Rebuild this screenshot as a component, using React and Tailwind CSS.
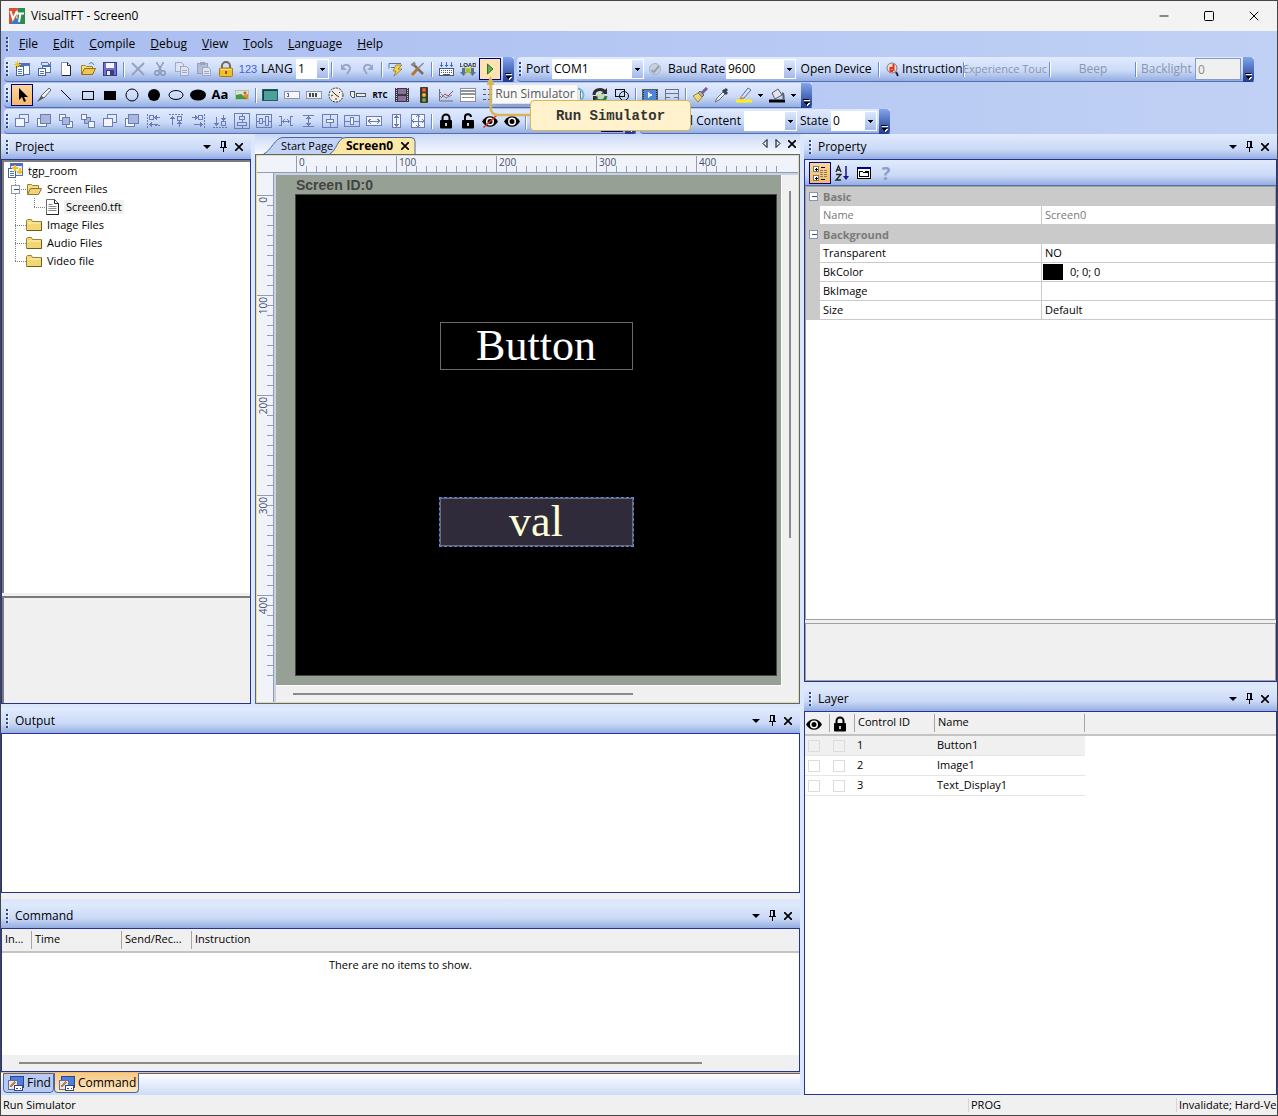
import { X, Minus, Square } from "lucide-react";

const Svg = ({ children, size = 16, crisp }) => (
  <svg
    width={size}
    height={size}
    viewBox="0 0 16 16"
    fill="none"
    shapeRendering={crisp ? "crispEdges" : "auto"}
    className="shrink-0"
    aria-hidden="true"
  >
    {children}
  </svg>
);

const B = "#6b7db3"; // outline colour of the alignment icons

const icons = {
  newProject: (
    <Svg crisp>
      <rect x="5.500" y="2.500" width="10" height="11" fill="#f4f8ff" stroke="#5b6fa8" />
      <rect x="5" y="2" width="11" height="3" fill="#4f6fc4" />
      <rect x="2.500" y="5.500" width="7" height="9" fill="#fff" stroke="#4a62a0" />
      <path d="M4 8.500h4M4 10.500h4M4 12.500h4" stroke="#4a78c8" />
      <path d="M3.500 0v7M0 3.500h7M1 1l5 5M6 1l-5 5" stroke="#f2c312" />
    </Svg>
  ),
  project: (
    <Svg crisp>
      <rect x="3.500" y=".5" width="12" height="12" fill="#e7effd" stroke="#5b6fa8" />
      <rect x="3" y="0" width="13" height="3" fill="#4f6fc4" />
      <rect x="1.500" y="5.500" width="7" height="9" fill="#fff" stroke="#4a62a0" />
      <path d="M3 8.500h4M3 10.500h4M3 12.500h4" stroke="#4a78c8" />
      <path d="M7.500 2v6M5 4.500h6M12.500 5v6M10 8.500h5" stroke="#f2c312" strokeWidth="2" />
    </Svg>
  ),
  openProject: (
    <Svg crisp>
      <rect x="6.500" y="4.500" width="8" height="7" fill="#f4f8ff" stroke="#5b6fa8" />
      <rect x="6" y="4" width="9" height="2" fill="#4f6fc4" />
      <rect x="2.500" y="7.500" width="7" height="7" fill="#fff" stroke="#4a62a0" />
      <path d="M4 10.500h4M4 12.500h4" stroke="#4a78c8" />
      <path d="M5 4V2.500L7 1h4l2 2M11.500 3.500H14V1" stroke="#6c7bab" />
    </Svg>
  ),
  file: (
    <Svg>
      <path d="M3.500 1.500h6l3 3v10h-9z" fill="#fff" stroke="#8a90a3" />
      <path d="M9.500 1.500v3h3" stroke="#22252e" />
      <path d="M4 14.500h8.500V5" stroke="#22252e" />
    </Svg>
  ),
  open: (
    <Svg>
      <path d="M1.500 13.500v-9h4l1 1h6v3" fill="#f7dd84" stroke="#a08030" />
      <path d="M1.500 13.500l3-6h11l-3 6z" fill="#f2c64d" stroke="#8d6d1f" />
      <path d="M9 3q3-3 5 1" stroke="#5c74ab" />
    </Svg>
  ),
  openFolder: (
    <Svg>
      <path d="M1.500 13.500v-10h4l1 1h6v3" fill="#f7dd84" stroke="#a08030" />
      <path d="M1.500 13.500l3-6h11l-3 6z" fill="#f4d27a" stroke="#8d7535" />
    </Svg>
  ),
  save: (
    <Svg crisp>
      <rect x="1.500" y="1.500" width="13" height="13" fill="#6f6fd0" stroke="#3a3a92" />
      <rect x="4" y="2" width="8" height="5" fill="#f4f5ff" />
      <rect x="4" y="9" width="8" height="6" fill="#3c3c78" />
      <rect x="5" y="10" width="3" height="4" fill="#e8e8f8" />
    </Svg>
  ),
  cut: (
    <Svg>
      <path d="M4.500 1l5 9M11.500 1l-5 9" stroke="#8b96b3" strokeWidth="1.500" />
      <circle cx="5" cy="12" r="2.200" stroke="#8b96b3" strokeWidth="1.500" />
      <circle cx="11" cy="12" r="2.200" stroke="#8b96b3" strokeWidth="1.500" />
    </Svg>
  ),
  del: (
    <Svg>
      <path d="M2 2l12 12M14 2L2 14" stroke="#98a2bd" strokeWidth="2" />
    </Svg>
  ),
  copy: (
    <Svg crisp>
      <path d="M1.500 1.500h6l2 2v7h-8z" fill="#dbe3f4" stroke="#a0a9c0" />
      <path d="M6.500 5.500h6l2 2v7h-8z" fill="#dbe3f4" stroke="#a0a9c0" />
      <path d="M8 9.500h5M8 11.500h5" stroke="#a0a9c0" />
    </Svg>
  ),
  paste: (
    <Svg crisp>
      <rect x="1.500" y="2.500" width="10" height="10" fill="#b4bdd2" stroke="#98a2bd" />
      <rect x="4" y="1" width="5" height="3" fill="#98a2bd" />
      <path d="M6.500 6.500h6l2 2v6h-8z" fill="#dbe3f4" stroke="#a0a9c0" />
      <path d="M8 10.500h5M8 12.500h5" stroke="#a0a9c0" />
    </Svg>
  ),
  goldLock: (
    <Svg>
      <path d="M4 8V5a4 4 0 018 0v3" stroke="#6d6d55" strokeWidth="2" />
      <rect x="1.500" y="7" width="13" height="8.500" rx="1" fill="#f3bd2d" stroke="#a97c10" />
      <path d="M2.500 8.500h11" stroke="#fbe08a" />
      <rect x="7.300" y="10" width="1.600" height="3" fill="#6b4a05" />
    </Svg>
  ),
  undo: (
    <Svg>
      <path d="M5 5c4-3 9 0 6 5l-2 3" stroke="#98a5c8" strokeWidth="2" />
      <path d="M3 3v6h6z" fill="#98a5c8" />
    </Svg>
  ),
  redo: (
    <Svg>
      <path d="M11 5C7 2 2 5 5 10l2 3" stroke="#98a5c8" strokeWidth="2" />
      <path d="M13 3v6H7z" fill="#98a5c8" />
    </Svg>
  ),
  flash: (
    <Svg>
      <path d="M1 2.500h12M1 2.500v5M3 6.500h4" stroke="#5c72ad" />
      <path d="M8 4h6l-4 4h4l-8 7 2-5H5z" fill="#f7d64c" stroke="#8f7722" strokeWidth=".8" />
    </Svg>
  ),
  tools: (
    <Svg>
      <path d="M3 3l10 10" stroke="#76716d" strokeWidth="2.500" />
      <path d="M1.500 4.500L5 1.500" stroke="#8d8782" strokeWidth="2.500" />
      <path d="M13.500 2L7 8.500" stroke="#8a8a8a" strokeWidth="1.500" />
      <path d="M7.500 8L2 14" stroke="#b9762a" strokeWidth="3" />
    </Svg>
  ),
  compile: (
    <Svg crisp>
      <path d="M3.500 1v5M8.500 1v5M13.500 1v5M2 4.500h3M7 4.500h3M12 4.500h3" stroke="#3f68d8" />
      <rect x="1.500" y="7.500" width="14" height="7" fill="#fff" stroke="#4e5878" />
      <path d="M3 9.500h11M3 11.500h11" stroke="#4e5878" strokeDasharray="1 1" />
      <path d="M5 13.500h7" stroke="#4e5878" />
    </Svg>
  ),
  load: (
    <Svg>
      <text x="8" y="5.500" fontSize="6" fontWeight="700" textAnchor="middle" fill="#222" fontFamily="Liberation Sans, sans-serif">
        LOAD
      </text>
      <path d="M2 7h3v4h2l-3.500 4L0 11h2zM11 7h3v4h2l-3.500 4L9 11h2z" fill="#5a7196" />
      <circle cx="8" cy="9.500" r="2.600" fill="#9bcb1e" />
      <path d="M4.500 6l7 7M11.500 6l-7 7" stroke="#c5b21a" />
    </Svg>
  ),
  play: (
    <Svg>
      <path d="M5.500 3v10l5.500-5z" fill="#5fae49" stroke="#2f6f2a" />
    </Svg>
  ),
  arrow: (
    <Svg>
      <path d="M5 1v12l3-3 2 5 2-1-2-4h4z" fill="#000" />
    </Svg>
  ),
  pen: (
    <Svg>
      <path d="M1 15l4-6 3 2z" fill="#555" />
      <path d="M5 9l8-8 2 2-7 8z" fill="#f2f2f2" stroke="#666" />
    </Svg>
  ),
  line: (
    <Svg>
      <path d="M3 3l10 10" stroke="#000" />
    </Svg>
  ),
  rect: (
    <Svg crisp>
      <rect x="2.500" y="4.500" width="11" height="8" stroke="#000" />
    </Svg>
  ),
  rectFill: (
    <Svg crisp>
      <rect x="2" y="4" width="12" height="9" fill="#000" />
    </Svg>
  ),
  circle: (
    <Svg>
      <circle cx="8" cy="8" r="6" stroke="#000" />
    </Svg>
  ),
  circleFill: (
    <Svg>
      <circle cx="8" cy="8" r="6" fill="#000" />
    </Svg>
  ),
  ellipse: (
    <Svg>
      <ellipse cx="8" cy="8" rx="7" ry="4.500" stroke="#000" />
    </Svg>
  ),
  ellipseFill: (
    <Svg>
      <ellipse cx="8" cy="8" rx="8" ry="5.500" fill="#000" />
    </Svg>
  ),
  picture: (
    <Svg>
      <rect x="1.500" y="3.500" width="13" height="9" fill="#d7e5c9" stroke="#b7bfae" />
      <path d="M2 8l5-1 7 5H2z" fill="#3f9a43" />
      <path d="M8 9l6-2v5z" fill="#e08a2d" />
      <circle cx="11" cy="6" r="1.500" fill="#e24b2b" />
    </Svg>
  ),
  panel: (
    <Svg crisp>
      <rect x=".5" y="2.500" width="15" height="11" fill="#4fa09b" stroke="#1f5f5f" />
      <path d="M1 3.500h14M1.500 4v9" stroke="#153d3d" />
    </Svg>
  ),
  edit: (
    <Svg crisp>
      <rect x=".5" y="4.500" width="15" height="7" fill="#f4f6fb" stroke="#8d95a8" />
      <path d="M3 6.500h2M3 9.500h2M4 6v4" stroke="#5b6478" />
    </Svg>
  ),
  spin: (
    <Svg crisp>
      <rect x=".5" y="4.500" width="15" height="7" fill="#f0f1f5" stroke="#8d95a8" />
      <path d="M3 8h2M6 8h2M9 8h2" stroke="#4b4b4b" strokeWidth="4" />
    </Svg>
  ),
  gauge: (
    <Svg>
      <circle cx="8" cy="8" r="7" fill="#f2efe2" stroke="#333" strokeDasharray="2 1" />
      <path d="M8 8l-4-4M8 8l3 2M3 9l2-1M12 5l-1 1M8 13v-2" stroke="#333" />
    </Svg>
  ),
  slider: (
    <Svg crisp>
      <path d="M.5 4.500h4v6h-2l-2-2z" fill="#eee" stroke="#555" />
      <rect x="6.500" y="6.500" width="9" height="3" fill="#eee" stroke="#555" />
    </Svg>
  ),
  film: (
    <Svg crisp>
      <rect x="1" y="1" width="14" height="14" fill="#3c3644" />
      <rect x="4" y="2" width="8" height="5" fill="#867199" />
      <rect x="4" y="9" width="8" height="5" fill="#867199" />
      <path d="M2.500 1v14M13.500 1v14" stroke="#cfc9d6" strokeDasharray="1 1" />
    </Svg>
  ),
  traffic: (
    <Svg>
      <rect x="4" y="0" width="8" height="16" rx="1" fill="#43382d" />
      <circle cx="8" cy="3" r="2" fill="#e0622f" />
      <circle cx="8" cy="8" r="2" fill="#e9b13c" />
      <circle cx="8" cy="13" r="2" fill="#55b645" />
    </Svg>
  ),
  chart: (
    <Svg>
      <path d="M1.500 2v12H15M1 5.500h2M1 9.500h2" stroke="#6b7079" />
      <path d="M3 11l4-4 3 2 5-5" stroke="#b8434a" />
      <path d="M3 7l5 4 6-3" stroke="#6f8199" />
    </Svg>
  ),
  list: (
    <Svg crisp>
      <rect x=".5" y="1.500" width="15" height="13" fill="#fff" stroke="#8a8f99" />
      <path d="M1 3.500h14M1 6.500h14" stroke="#8e939c" strokeWidth="2" />
      <path d="M2 10.500h12" stroke="#8a8f99" />
    </Svg>
  ),
  tree: (
    <Svg crisp>
      <path d="M1 2.500h3M1 7.500h3M1 12.500h3M6 2.500h8M6 7.500h8M6 12.500h8" stroke="#555" />
    </Svg>
  ),
  ring: (
    <Svg>
      <circle cx="7" cy="8" r="6.500" fill="#e9f4fb" stroke="#6db7dd" strokeWidth="2" />
      <path d="M10.500 4v8" stroke="#777" />
    </Svg>
  ),
  recycle: (
    <Svg>
      <path d="M2 8c0-6 8-7 11-3" stroke="#2e2e2e" strokeWidth="3" />
      <path d="M15 1v6H9z" fill="#2e2e2e" />
      <path d="M14 9c-1 6-8 6-11 2" stroke="#3b7d2c" strokeWidth="3" />
      <path d="M1 15V9h6z" fill="#2e2e2e" />
      <path d="M4 8c4 2 6 1 8-1" stroke="#c9df7c" strokeWidth="2" />
    </Svg>
  ),
  shapes: (
    <Svg>
      <rect x="1.500" y="2.500" width="9" height="7" stroke="#111" />
      <circle cx="10" cy="9" r="4.500" stroke="#111" />
    </Svg>
  ),
  video: (
    <Svg crisp>
      <rect x=".5" y="2.500" width="15" height="11" fill="#4b86d8" stroke="#5b5b5b" />
      <path d="M1.500 3v10M14.500 3v10" stroke="#333" strokeDasharray="1 1" />
      <path d="M6 5v6l5-3z" fill="#fff" />
    </Svg>
  ),
  form: (
    <Svg crisp>
      <path d="M1.500 13.500v-11h13v11M1.500 6.500h13M2 10.500h4M10 10.500h4M1.500 13.500h4M10 13.500h5" stroke="#70747c" />
    </Svg>
  ),
  brush: (
    <Svg>
      <path d="M15 1l-5 5" stroke="#7a5a95" strokeWidth="3" />
      <path d="M8 4l4 4-2 2-4-4z" fill="#a9a9a9" stroke="#666" />
      <path d="M6 6l4 4-4 5-5-6z" fill="#f0d878" stroke="#9c8438" />
    </Svg>
  ),
  picker: (
    <Svg>
      <path d="M1 15l2-4 6-6 2 2-6 6z" fill="#e8edf5" stroke="#6a7487" />
      <path d="M9 3l4 4M10 5l3-3" stroke="#39424f" strokeWidth="3" />
    </Svg>
  ),
  highlight: (
    <Svg>
      <path d="M5 10l7-9 3 2-7 8-4 1z" fill="#dcdff0" stroke="#5d6ba5" />
      <path d="M4 12l1-3 3 2z" fill="#f2a33c" />
      <rect y="12.500" width="16" height="3" fill="#fdf01e" />
    </Svg>
  ),
  bucket: (
    <Svg>
      <path d="M3 6l6-4 4 6-7 4z" fill="#e1e4ea" stroke="#555d6b" />
      <path d="M13 6q2 1 1.500 6" stroke="#555d6b" strokeWidth="2" />
      <rect y="12.500" width="16" height="3" fill="#000" />
    </Svg>
  ),
  lock: (
    <Svg>
      <path d="M4.500 8V5a3.500 3.500 0 017 0v3" stroke="#000" strokeWidth="2" />
      <rect x="2" y="7" width="12" height="8.500" rx="1" fill="#000" />
      <rect x="7.200" y="10" width="1.600" height="3" fill="#fff" />
    </Svg>
  ),
  unlock: (
    <Svg>
      <path d="M5 8V4.500a3 3 0 016-.5" stroke="#000" strokeWidth="2" />
      <rect x="2" y="7" width="12" height="8.500" rx="1" fill="#000" />
      <rect x="7.200" y="10" width="1.600" height="3" fill="#fff" />
    </Svg>
  ),
  eye: (
    <Svg>
      <path d="M0 8.500c4-7 12-7 16 0-4 7-12 7-16 0z" fill="#000" />
      <circle cx="8" cy="8.500" r="4" fill="#fff" />
      <circle cx="8" cy="8.500" r="2.500" fill="#000" />
    </Svg>
  ),
  eyeOff: (
    <Svg>
      <path d="M0 8.500c4-7 12-7 16 0-4 7-12 7-16 0z" fill="#000" />
      <circle cx="8" cy="8.500" r="4" fill="#fff" />
      <circle cx="8" cy="8.500" r="2.500" fill="#000" />
      <path d="M1.500 14.500l13-12" stroke="#e0322b" strokeWidth="1.600" />
    </Svg>
  ),
  connect: (
    <Svg>
      <circle cx="8" cy="8" r="5.500" fill="#c9d0de" stroke="#a9b2c6" />
      <path d="M4.500 9l2.500 2 5-6" stroke="#98a1b6" strokeWidth="2" />
    </Svg>
  ),
  find: (
    <Svg>
      <circle cx="7" cy="7" r="5" fill="#f3ded6" stroke="#7d7a86" />
      <path d="M8.500 3v7M8 7H5.500v3H8" stroke="#e03618" strokeWidth="2" />
      <path d="M11 11l2 4" stroke="#2b2050" strokeWidth="2" />
    </Svg>
  ),
  // stacking order
  front: (
    <Svg crisp>
      <rect x="5.500" y="1.500" width="9" height="8" fill="#e4ebfa" stroke={B} />
      <rect x="1.500" y="5.500" width="9" height="8" fill="#f2f5fc" stroke={B} />
    </Svg>
  ),
  back: (
    <Svg crisp>
      <rect x="1.500" y="5.500" width="9" height="8" fill="#f2f5fc" stroke={B} />
      <rect x="4.500" y="1.500" width="10" height="9" fill="#a9b7dc" stroke={B} />
    </Svg>
  ),
  forward: (
    <Svg crisp>
      <rect x="1.500" y="1.500" width="6" height="6" fill="#f2f5fc" stroke={B} />
      <rect x="8.500" y="8.500" width="6" height="6" fill="#f2f5fc" stroke={B} />
      <rect x="4.500" y="4.500" width="7" height="7" fill="#a9b7dc" stroke={B} />
    </Svg>
  ),
  backward: (
    <Svg crisp>
      <rect x="4.500" y="4.500" width="6" height="6" fill="#a9b7dc" stroke={B} />
      <rect x="1.500" y="1.500" width="5" height="5" fill="#f2f5fc" stroke={B} />
      <rect x="8.500" y="8.500" width="6" height="6" fill="#f2f5fc" stroke={B} />
    </Svg>
  ),
  // alignment
  left: (
    <Svg crisp>
      <path d="M1.500 1v14M9 12.500h5" stroke={B} strokeDasharray="2 1" />
      <rect x="3.500" y="2.500" width="4" height="4" stroke={B} />
      <path d="M9 4.500h5M11 2.500l-2 2 2 2M4 11.500h8M6 9.500l-2 2 2 2" stroke={B} />
    </Svg>
  ),
  top: (
    <Svg crisp>
      <path d="M1 1.500h14" stroke={B} strokeDasharray="2 1" />
      <rect x="9.500" y="3.500" width="4" height="4" stroke={B} />
      <path d="M4.500 4v8M2.500 6l2-2 2 2M11.500 9v5M9.500 11l2-2 2 2" stroke={B} />
    </Svg>
  ),
  right: (
    <Svg crisp>
      <path d="M14.500 1v14" stroke={B} strokeDasharray="2 1" />
      <rect x="8.500" y="2.500" width="4" height="4" stroke={B} />
      <path d="M2 4.500h5M5 2.500l2 2-2 2M4 11.500h8M10 9.500l2 2-2 2" stroke={B} />
    </Svg>
  ),
  bottom: (
    <Svg crisp>
      <path d="M1 14.500h14" stroke={B} strokeDasharray="2 1" />
      <rect x="9.500" y="8.500" width="4" height="4" stroke={B} />
      <path d="M4.500 4v8M2.500 10l2 2 2-2M11.500 2v5M9.500 5l2 2 2-2" stroke={B} />
    </Svg>
  ),
  centerH: (
    <Svg crisp>
      <rect x=".5" y=".5" width="15" height="15" stroke={B} />
      <rect x="5.500" y="3.500" width="5" height="3" stroke={B} />
      <rect x="3.500" y="9.500" width="9" height="3" stroke={B} />
      <path d="M8 1v2M8 7v2M8 13v2" stroke={B} />
    </Svg>
  ),
  centerV: (
    <Svg crisp>
      <rect x=".5" y="1.500" width="15" height="13" stroke={B} />
      <rect x="3.500" y="5.500" width="3" height="5" stroke={B} />
      <rect x="9.500" y="3.500" width="3" height="9" stroke={B} />
      <path d="M1 8h2M7 8h2M13 8h2" stroke={B} />
    </Svg>
  ),
  spaceH: (
    <Svg crisp>
      <path d="M1 3.500h2.500v9H1M15 3.500h-2.500v9H15M5 8.500h7M6.500 6.500l-2 2 2 2M9.500 6.500l2 2-2 2" stroke={B} />
    </Svg>
  ),
  spaceV: (
    <Svg crisp>
      <path d="M3 2.500h11M3 13.500h11M8.500 4v8M6.500 6l2-2 2 2M6.500 10l2 2 2-2" stroke={B} />
    </Svg>
  ),
  midH: (
    <Svg crisp>
      <rect x=".5" y="1.500" width="15" height="13" stroke={B} />
      <rect x="4.500" y="6.500" width="7" height="3" fill="#f2f5fc" stroke={B} />
      <path d="M8 2v4M8 10v4" stroke={B} />
    </Svg>
  ),
  midV: (
    <Svg crisp>
      <rect x=".5" y="2.500" width="15" height="11" stroke={B} />
      <rect x="6.500" y="4.500" width="3" height="7" fill="#f2f5fc" stroke={B} />
      <path d="M1 8h5M10 8h5" stroke={B} />
    </Svg>
  ),
  sameW: (
    <Svg crisp>
      <rect x=".5" y="3.500" width="15" height="9" fill="#f2f5fc" stroke={B} />
      <path d="M2 8.500h12M5 6l-3 2 3 3M11 6l3 2-3 3" stroke={B} />
    </Svg>
  ),
  sameH: (
    <Svg crisp>
      <rect x="4.500" y="1.500" width="8" height="13" fill="#f2f5fc" stroke={B} />
      <path d="M8.500 3v10M6.500 5l2-2 2 2M6.500 11l2 2 2-2" stroke={B} />
    </Svg>
  ),
  sameSize: (
    <Svg crisp>
      <rect x="1.500" y="1.500" width="13" height="13" fill="#f2f5fc" stroke={B} />
      <path d="M8 1v14M1 8h14M6 4l2-2 2 2M6 12l2 2 2-2M4 6L2 8l2 2M12 6l2 2-2 2" stroke={B} />
    </Svg>
  ),
  folder: (
    <Svg>
      <path d="M.5 13.500v-10l1-1h4l1 2h9v9z" fill="#f3d774" stroke="#9b8334" />
      <path d="M1.500 6h13" stroke="#fdf2bd" />
      <path d="M1 13.500h14.500V5" stroke="#6f5c1f" />
    </Svg>
  ),
  doc: (
    <Svg>
      <path d="M1.500 .5h8l4 4v11h-12z" fill="#fff" stroke="#6b6b6b" />
      <path d="M9.500 .5v4h4v11h-12" stroke="#222" />
      <path d="M3.500 5.500h4M3.500 7.500h8M3.500 9.500h8M3.500 11.500h8" stroke="#888" />
    </Svg>
  ),
  categorized: (
    <Svg crisp>
      <rect x="1.500" y="1.500" width="5" height="5" fill="#fff" stroke="#777" />
      <rect x="1.500" y="10.500" width="5" height="5" fill="#fff" stroke="#777" />
      <path d="M3 4h3M4 3v3M3 13h3M4 12v3" stroke="#000" />
      <path d="M9 2.500h4M9 14.500h4" stroke="#000" />
      <path d="M8 5.500h3M12 5.500h3M8 7.500h3M12 7.500h3M8 9.500h3M12 9.500h3M8 11.500h3M12 11.500h3" stroke="#8a8060" />
    </Svg>
  ),
  sortAz: (
    <Svg>
      <path d="M2 7l2.500-6L7 7M3 5h3M2 9.500h5L2 15h5" stroke="#222" strokeWidth="1.300" />
      <path d="M12 1v11" stroke="#17178c" strokeWidth="1.500" />
      <path d="M9 11h6l-3 4z" fill="#17178c" />
    </Svg>
  ),
  pages: (
    <Svg crisp>
      <rect x="1.500" y="2.500" width="13" height="11" fill="#fff" stroke="#000" />
      <rect x="1" y="2" width="14" height="2" fill="#000080" />
      <path d="M3.500 11.500v-5h3l1 1h5v4zM9 6.500h3.500" stroke="#000" />
    </Svg>
  ),
  output: (
    <Svg crisp>
      <rect x="2.500" y="1.500" width="13" height="11" fill="#4f7ee0" stroke="#31467f" />
      <rect x=".5" y="5.500" width="9" height="9" fill="#dfe8fb" stroke="#62718f" />
      <path d="M2 12l5-5" stroke="#d07b35" strokeWidth="2" />
      <rect x="6.500" y="10.500" width="8" height="5" fill="#fff" stroke="#31467f" />
      <path d="M8 13.500h2M12 13.500h1" stroke="#31467f" />
    </Svg>
  ),
};

const row1 = {
  a: ["newProject", "openProject", "file", "open", "save"],
  b: ["del", "cut", "copy", "paste", "goldLock"],
  c: ["undo", "redo"],
  d: ["flash", "tools"],
  e: ["compile", "load"],
};

const shapes = ["pen", "line", "rect", "rectFill", "circle", "circleFill", "ellipse", "ellipseFill"];
const widgets1 = ["panel", "edit", "spin", "gauge", "slider"];
const widgets2 = ["film", "traffic", "chart", "list", "tree", "rect", "rect", "rect", "ring", "recycle", "shapes"];
const align = [
  "front", "back", "forward", "backward", "front", "back", "left", "top", "right", "bottom",
  "centerH", "centerV", "spaceH", "spaceV", "midH", "midV", "sameW", "sameH", "sameSize",
];

const ToolButton = ({ icon, active, label, children }) => (
  <button
    aria-label={label || icon}
    className={
      active
        ? "flex h-[22px] w-[22px] shrink-0 items-center justify-center border border-[#000080] bg-gradient-to-b from-[#fbd59b] to-[#f4b968]"
        : "flex h-[22px] w-[22px] shrink-0 items-center justify-center"
    }
  >
    {children || icons[icon]}
  </button>
);

const Tools = ({ names }) => names.map((name, i) => <ToolButton key={name + i} icon={name} />);

const Sep = () => (
  <div className="flex w-[6px] shrink-0 justify-center">
    <div className="h-[15px] w-px bg-[#6b8cd0]" />
    <div className="h-[15px] w-px bg-white" />
  </div>
);

const Grip = () => (
  <div className="flex w-[7px] shrink-0 justify-center">
    <div className="h-[14px] w-[2px] bg-[repeating-linear-gradient(to_bottom,#33477f_0px,#33477f_2px,transparent_2px,transparent_4px)]" />
    <div className="h-[14px] w-px bg-white/60" />
  </div>
);

const Cap = () => (
  <div className="ml-[2px] flex h-[25px] w-[11px] shrink-0 flex-col items-center justify-end rounded-r-sm bg-gradient-to-b from-[#84a4ec] to-[#1f3a90] pb-[2px]">
    <svg width="7" height="7" viewBox="0 0 7 7" shapeRendering="crispEdges">
      <path d="M1 1h6v1H1zM2 4h5L4 7z" fill="#fff" />
      <path d="M0 0h6v1H0zM1 3h5L3 6z" fill="#000" />
    </svg>
  </div>
);

const Toolbar = ({ children }) => (
  <div className="flex h-[25px] shrink-0 items-center rounded-l-sm border-b border-[#5270b0] bg-gradient-to-b from-[#e1ebfe] via-[#ccdbf8] via-55% to-[#95aee2]">
    {children}
  </div>
);

const DropArrow = () => (
  <svg width="5" height="3" viewBox="0 0 5 3" shapeRendering="crispEdges">
    <path d="M0 0h5L2.500 3z" fill="#000" />
  </svg>
);

const Combo = ({ id, value, width }) => (
  <div className={"relative flex h-5 shrink-0 border border-white bg-white " + width}>
    <select id={id} className="h-full w-full appearance-none bg-white pl-px outline-none">
      <option>{value}</option>
    </select>
    <span className="pointer-events-none absolute inset-y-0 right-0 flex w-[11px] items-center justify-center bg-gradient-to-b from-[#dde8fd] to-[#a3b9e8]">
      <DropArrow />
    </span>
  </div>
);

const RunButton = () => (
  <div className="relative z-10">
    <button
      aria-label="Run"
      className="flex h-[22px] w-[22px] items-center justify-center border border-[#000080] bg-[#fde3b0]"
    >
      {icons.play}
    </button>
    <div className="absolute top-[26px] left-[13px] h-5 w-[86px] border border-[#e3e3e3] bg-[#f9f9f9] text-center leading-[18px] whitespace-nowrap text-[#575757] shadow-md">
      Run Simulator
    </div>
    <svg className="absolute top-[18px] left-[5px]" width="52" height="44" viewBox="0 0 52 44" fill="none">
      <path d="M6.500 5v26q0 8 8 8H48" stroke="#d6b656" strokeWidth="2.500" />
      <path d="M6.500 0l4 9h-8z" fill="#d6b656" />
    </svg>
    <div className="absolute top-[42px] left-[51px] flex h-[31px] w-[161px] items-center justify-center rounded-[4px] border border-[#d6b656] bg-[#fff2cc] font-['Liberation_Mono',monospace] text-sm font-bold whitespace-nowrap text-[#333]">
      Run Simulator
    </div>
  </div>
);

const PanelHeader = ({ title }) => (
  <div className="flex h-[25px] shrink-0 items-center bg-gradient-to-b from-[#e1ebfe] via-[#ccdaf6] via-60% to-[#95aee2] pr-1 pl-[3px]">
    <Grip />
    <h2 className="flex-1 pl-1">{title}</h2>
    <button aria-label={title + " menu"} className="flex w-4 justify-center pt-px">
      <svg width="8" height="4" viewBox="0 0 8 4">
        <path d="M0 0h8L4 4z" fill="#000" />
      </svg>
    </button>
    <button aria-label={"Pin " + title} className="flex w-4 justify-center">
      <svg width="9" height="11" viewBox="0 0 9 11" fill="none" shapeRendering="crispEdges">
        <path d="M2.500 6V.5h4V6M5.500 1v5M1 6.500h7M4.500 7v4" stroke="#000" />
      </svg>
    </button>
    <button aria-label={"Close " + title} className="flex w-4 justify-center">
      <svg width="8" height="8" viewBox="0 0 8 8">
        <path d="M0 0l8 8M8 0L0 8" stroke="#000" strokeWidth="1.700" />
      </svg>
    </button>
  </div>
);

const Minimized = ({ x = 0.5, y = 0.5 }) => (
  <>
    <rect x={x} y={y} width="8" height="8" fill="#fff" stroke="#8c97ad" />
    <path d={`M${x + 2} ${y + 4}h5`} stroke="#31509f" />
  </>
);

const Guide = ({ open, last, nested }) => (
  <svg
    width={nested ? 41 : 22}
    height="18"
    viewBox={nested ? "0 0 41 18" : "0 0 22 18"}
    fill="none"
    shapeRendering="crispEdges"
    className="shrink-0"
  >
    <path
      d={nested ? "M11.500 0v18M30.500 0v10M30 9.500h11" : `M11.500 0v${last ? 10 : 18}M11 9.500h11`}
      stroke="#808080"
      strokeDasharray="1 1"
    />
    {open && <Minimized x={7.5} y={5.5} />}
  </svg>
);

const ProjectPanel = () => (
  <section className="flex w-[250px] shrink-0 flex-col">
    <PanelHeader title="Project" />
    <div className="flex flex-1 flex-col border border-[#24348f] bg-[#f0f0f0]">
      <ul className="flex-1 border-t-2 border-l-2 border-[#7b7b7b] bg-white text-[11px]">
        <li className="flex h-[18px] items-center pl-[3px]">
          {icons.project}
          <span className="pl-[5px]">tgp_room</span>
        </li>
        <li className="flex h-[18px] items-center">
          <Guide open />
          {icons.openFolder}
          <span className="pl-[5px]">Screen Files</span>
        </li>
        <li className="flex h-[18px] items-center">
          <Guide nested />
          {icons.doc}
          <span className="ml-[3px] bg-[#f0f0f0] px-[2px]">Screen0.tft</span>
        </li>
        {["Image Files", "Audio Files", "Video file"].map((name, i) => (
          <li key={name} className="flex h-[18px] items-center">
            <Guide last={i === 2} />
            {icons.folder}
            <span className="pl-[5px]">{name}</span>
          </li>
        ))}
      </ul>
      <div className="mt-[3px] h-[107px] border-t-2 border-l-2 border-[#7b7b7b]" />
    </div>
  </section>
);

const ticks = Array.from({ length: 49 }, (_, i) => i);

const HRuler = () => (
  <div className="flex h-[17px] items-end overflow-hidden border-b border-[#929db5] bg-[#f1f3fa] pl-[39px]">
    {ticks.map((i) =>
      i % 10 === 0 ? (
        <div key={i} className="relative h-4 w-[10px] shrink-0 border-l border-[#929db5]">
          <span className="absolute top-0 left-[2px] text-[10px] leading-[12px] text-[#44506e]">{i * 10}</span>
        </div>
      ) : (
        <div key={i} className="h-[6px] w-[10px] shrink-0 border-l border-[#929db5]" />
      )
    )}
  </div>
);

const VRuler = () => (
  <div className="flex w-[17px] shrink-0 flex-col items-end overflow-hidden border-r border-[#929db5] bg-[#f1f3fa] pt-[22px]">
    {ticks.map((i) =>
      i % 10 === 0 ? (
        <div key={i} className="relative h-[10px] w-4 shrink-0 border-t border-[#929db5]">
          <span className="absolute top-px left-0 rotate-180 text-[10px] leading-[12px] text-[#44506e] [writing-mode:vertical-rl]">
            {i * 10}
          </span>
        </div>
      ) : (
        <div key={i} className="h-[10px] w-[6px] shrink-0 border-t border-[#929db5]" />
      )
    )}
  </div>
);

const Editor = () => (
  <section className="flex min-w-0 flex-1 flex-col">
    <div className="flex h-5 shrink-0 items-end bg-gradient-to-b from-[#cbd9f7] to-[#f6f9ff] pl-2">
      <button className="relative h-[17px] w-[78px] text-left whitespace-nowrap">
        <svg className="absolute inset-0" width="86" height="17" viewBox="0 0 86 17">
          <path d="M.5 17C8 14 12 .5 20 .5h58q4 0 4 4V17" fill="#c3d3f6" stroke="#4a66a8" />
        </svg>
        <span className="relative pl-[18px] text-[11px] leading-[17px]">Start Page</span>
      </button>
      <button className="relative -ml-3 h-[17px] w-[87px] text-left whitespace-nowrap">
        <svg className="absolute inset-0" width="87" height="17" viewBox="0 0 87 17">
          <path d="M.5 17C8 14 8 .5 17 .5h65q4 0 4 4V17" fill="#fbe7a6" stroke="#4a66a8" />
        </svg>
        <span className="relative flex items-center gap-2 pl-[17px] leading-[17px] font-bold">
          Screen0
          <svg width="8" height="8" viewBox="0 0 8 8">
            <path d="M0 0l8 8M8 0L0 8" stroke="#000" strokeWidth="1.700" />
          </svg>
        </span>
      </button>
      <div className="mb-[6px] ml-auto flex items-center gap-[7px] pr-[4px]">
        <svg width="6" height="9" viewBox="0 0 6 9" fill="none">
          <path d="M5 .5v8l-4-4z" stroke="#000" />
        </svg>
        <svg width="6" height="9" viewBox="0 0 6 9" fill="none">
          <path d="M1 .5v8l4-4z" stroke="#000" />
        </svg>
        <svg width="8" height="8" viewBox="0 0 8 8">
          <path d="M0 0l8 8M8 0L0 8" stroke="#000" strokeWidth="1.700" />
        </svg>
      </div>
    </div>
    <div className="flex flex-1 flex-col border border-[#4a66a8]">
      <div className="flex flex-1 flex-col border border-[#f7dc7a]">
        <HRuler />
        <div className="flex flex-1">
          <VRuler />
          <div className="flex flex-1 flex-col border-t-2 border-l-2 border-[#c9d2e5] bg-[#f0f0f0]">
            <div className="flex flex-1">
              <div className="flex-1 border-r border-b border-white bg-[#96a094] pl-[19px]">
                <h3 className="h-[19px] pl-px font-['Liberation_Sans',sans-serif] text-sm leading-[20px] font-bold text-[#444]">
                  Screen ID:0
                </h3>
                <div className="flex h-[482px] w-[482px] flex-col items-center border border-[#444] bg-black pt-[127px] font-['Liberation_Serif',serif] text-[44px]">
                  <button className="h-12 w-[193px] border border-[#6b6b6b] leading-[46px] text-white">Button</button>
                  <div className="mt-[127px] h-[50px] w-[195px] border border-dashed border-[#5b86ea] bg-[#2f2b3a]">
                    <div className="h-12 border border-[#6b6b6b] text-center leading-[46px] text-[#ffffd5]">val</div>
                  </div>
                </div>
              </div>
              <div className="w-4 pt-4 pl-[7px]">
                <div className="h-[347px] w-[2px] bg-[#8a8a8a]" />
              </div>
            </div>
            <div className="h-4 pt-[7px] pl-[17px]">
              <div className="h-[2px] w-[340px] bg-[#8a8a8a]" />
            </div>
          </div>
        </div>
      </div>
    </div>
  </section>
);

const groups = [
  { name: "Basic", rows: [["Name", "Screen0", true]] },
  {
    name: "Background",
    rows: [
      ["Transparent", "NO"],
      ["BkColor", "0; 0; 0"],
      ["BkImage", ""],
      ["Size", "Default"],
    ],
  },
];

const PropertyPanel = () => (
  <section className="flex flex-1 flex-col">
    <PanelHeader title="Property" />
    <div className="flex flex-1 flex-col border border-[#24348f] bg-[#f0f0f0]">
      <div className="flex h-[26px] items-center border-b border-[#5270b0] bg-gradient-to-b from-[#e1ebfe] via-[#ccdaf6] via-60% to-[#95aee2] pl-1">
        <ToolButton icon="categorized" active />
        <ToolButton icon="sortAz" />
        <ToolButton icon="pages" />
        <ToolButton label="Help">
          <span className="text-lg font-bold text-[#8b9dc8]">?</span>
        </ToolButton>
      </div>
      <div className="flex-1 border border-[#a0a0a0] bg-white">
        <table className="w-full table-fixed border-separate border-spacing-0 text-[11px]">
          <colgroup>
            <col className="w-[14px]" />
            <col className="w-[222px]" />
            <col />
          </colgroup>
          {groups.map((group) => (
            <tbody key={group.name}>
              <tr className="h-[19px] bg-[#cacaca]">
                <td className="p-0">
                  <button aria-label={"Collapse " + group.name} className="flex w-full justify-center">
                    <svg width="9" height="9" viewBox="0 0 9 9" shapeRendering="crispEdges">
                      <Minimized />
                    </svg>
                  </button>
                </td>
                <th colSpan="2" className="p-0 pl-[3px] text-left leading-[18px] font-bold text-[#7a7a7a]">
                  {group.name}
                </th>
              </tr>
              {group.rows.map(([name, value, dim]) => (
                <tr key={name} className={dim ? "h-[19px] text-[#7a7a7a]" : "h-[19px]"}>
                  <td className="bg-[#cacaca] p-0" />
                  <td className="border-r border-b border-[#cacaca] p-0 pl-[3px] leading-[18px]">{name}</td>
                  <td className="border-b border-[#cacaca] p-0 pl-[3px] leading-[18px]">
                    {name === "BkColor" ? (
                      <span className="-ml-[2px] flex items-center gap-[7px]">
                        <span className="h-4 w-5 bg-black" />
                        {value}
                      </span>
                    ) : (
                      value
                    )}
                  </td>
                </tr>
              ))}
            </tbody>
          ))}
        </table>
      </div>
      <div className="mt-[3px] h-[58px] border border-[#a0a0a0]" />
    </div>
  </section>
);

const headCell =
  "relative p-0 text-left font-normal after:absolute after:top-[2px] after:right-0 after:h-[18px] after:w-px after:bg-[#a5a5a5]";

const layerCell = "border-b border-[#e6e6e6] p-0";

const LayerPanel = () => (
  <section className="mt-1 flex h-[409px] flex-col">
    <PanelHeader title="Layer" />
    <div className="flex-1 border border-[#24348f] bg-[linear-gradient(to_bottom,#f0f0f0_22px,#c3c3c3_22px,#c3c3c3_24px,white_24px)]">
      <table className="w-[280px] table-fixed border-separate border-spacing-0 text-[11px]">
        <colgroup>
          <col className="w-[25px]" />
          <col className="w-[25px]" />
          <col className="w-20" />
          <col />
        </colgroup>
        <thead>
          <tr className="h-6">
            <th className={headCell}>
              <span className="flex pl-px">{icons.eye}</span>
            </th>
            <th className={headCell}>
              <span className="flex pl-[2px]">{icons.lock}</span>
            </th>
            <th className={headCell}>
              <span className="block pb-1 pl-[3px]">Control ID</span>
            </th>
            <th className={headCell}>
              <span className="block pb-1 pl-[3px]">Name</span>
            </th>
          </tr>
        </thead>
        <tbody>
          {["Button1", "Image1", "Text_Display1"].map((name, i) => (
            <tr key={name} className={i === 0 ? "h-5 bg-[#f0f0f0]" : "h-5"}>
              <td className={layerCell + " pl-[3px]"}>
                <input type="checkbox" aria-label={"Show " + name} className="block size-3 appearance-none border border-[#dcdcdc]" />
              </td>
              <td className={layerCell + " pl-[3px]"}>
                <input type="checkbox" aria-label={"Lock " + name} className="block size-3 appearance-none border border-[#dcdcdc]" />
              </td>
              <td className={layerCell + " pl-[2px]"}>{i + 1}</td>
              <td className={layerCell + " pl-[2px]"}>{name}</td>
            </tr>
          ))}
        </tbody>
      </table>
    </div>
  </section>
);

const CommandPanel = () => (
  <section className="flex h-[169px] flex-col">
    <PanelHeader title="Command" />
    <div className="flex flex-1 flex-col border border-[#24348f] bg-white">
      <table className="w-full table-fixed border-separate border-spacing-0 text-[11px]">
        <colgroup>
          <col className="w-[30px]" />
          <col className="w-[90px]" />
          <col className="w-[70px]" />
          <col />
        </colgroup>
        <thead className="bg-[linear-gradient(to_bottom,#f0f0f0_22px,#c3c3c3_22px)]">
          <tr className="h-6">
            {["In...", "Time", "Send/Rec...", "Instruction"].map((name) => (
              <th key={name} className={name === "Instruction" ? "p-0 text-left font-normal" : headCell}>
                <span className="block pb-1 pl-[3px] whitespace-nowrap">{name}</span>
              </th>
            ))}
          </tr>
        </thead>
        <tbody>
          <tr>
            <td colSpan="4" className="p-0 pt-[5px] text-center">
              There are no items to show.
            </td>
          </tr>
        </tbody>
      </table>
      <div className="mt-auto h-4 bg-[#f0f0f0] pt-[7px] pl-[17px]">
        <div className="h-[2px] w-7/8 bg-[#8a8a8a]" />
      </div>
    </div>
  </section>
);

const menus = ["File", "Edit", "Compile", "Debug", "View", "Tools", "Language", "Help"];

export default function App() {
  return (
    <div className="flex min-h-screen flex-col border border-[#444] bg-[#f0f0f0] font-['Open_Sans','Noto_Sans',sans-serif] text-xs text-black">
      <header className="flex h-[30px] shrink-0 items-center bg-[#f3f3f3] pl-2">
        <svg width="16" height="16" viewBox="0 0 16 16">
          <path d="M0 0h9L6 16H0z" fill="#d9512f" />
          <path d="M9 0h7v16H8z" fill="#2f8a52" />
          <path d="M0 16l8-6 3 6z" fill="#3a78c8" />
          <path d="M1.500 3L4 11l4-8M7 5.500h8M11.500 5.500L10 14" stroke="#fff" strokeWidth="2" fill="none" />
        </svg>
        <h1 className="flex-1 pl-[6px]">VisualTFT - Screen0</h1>
        <button aria-label="Minimize" className="flex w-[45px] justify-center">
          <Minus size={14} strokeWidth={1.5} color="#000" />
        </button>
        <button aria-label="Maximize" className="flex w-[45px] justify-center">
          <Square size={12} strokeWidth={2} color="#000" />
        </button>
        <button aria-label="Close" className="flex w-[46px] justify-center">
          <X size={16} strokeWidth={1.5} color="#000" />
        </button>
      </header>

      <div className="shrink-0 bg-gradient-to-r from-[#a9bdf0] to-[#c1d1f5] pl-[3px]">
        <nav className="flex h-[26px] items-center">
          <Grip />
          {menus.map((m) => (
            <button key={m} className="pr-[7px] pl-2">
              <span className="underline">{m[0]}</span>
              {m.slice(1)}
            </button>
          ))}
        </nav>

        <div className="flex h-[26px] items-start gap-[3px]">
          <Toolbar>
            <Grip />
            <Tools names={row1.a} />
            <Sep />
            <Tools names={row1.b} />
            <button className="w-[22px] font-['Liberation_Sans',sans-serif] text-[11px] text-[#3b62e0]">123</button>
            <label htmlFor="lang" className="w-[37px] pl-[2px]">LANG</label>
            <Combo id="lang" value="1" width="w-[33px]" />
            <Sep />
            <Tools names={row1.c} />
            <Sep />
            <Tools names={row1.d} />
            <Sep />
            <Tools names={row1.e} />
            <RunButton />
            <Cap />
          </Toolbar>
          <Toolbar>
            <Grip />
            <label htmlFor="port" className="w-[28px] pl-[2px]">Port</label>
            <Combo id="port" value="COM1" width="w-[92px]" />
            <ToolButton icon="connect" />
            <label htmlFor="baud" className="w-[60px] pl-[2px] whitespace-nowrap">Baud Rate</label>
            <Combo id="baud" value="9600" width="w-[70px]" />
            <button className="w-[80px] whitespace-nowrap">Open Device</button>
            <Sep />
            <button className="flex w-[79px] items-center pl-[3px]">
              {icons.find}
              <span className="pl-px">Instruction</span>
            </button>
            <Sep />
            <button disabled className="-ml-1 w-[84px] text-left text-[11px] whitespace-nowrap text-[#8c95aa]">
              Experience Touc
            </button>
            <Sep />
            <button disabled className="w-[80px] text-[#8c95aa]">Beep</button>
            <Sep />
            <label htmlFor="backlight" className="w-[56px] pl-[2px] text-[#8c95aa]">Backlight</label>
            <input
              id="backlight"
              disabled
              defaultValue="0"
              className="h-[22px] w-[46px] border border-[#7f9bd0] bg-[#f0f0f0] pl-[2px] text-[#8a8a8a]"
            />
            <Cap />
          </Toolbar>
        </div>

        <div className="flex h-[26px] items-start">
          <Toolbar>
            <Grip />
            <ToolButton icon="arrow" active />
            <Tools names={shapes} />
            <ToolButton label="Text">
              <span className="text-[13px] font-bold">Aa</span>
            </ToolButton>
            <ToolButton icon="picture" />
            <Sep />
            <Tools names={widgets1} />
            <ToolButton label="Clock">
              <span className="text-[8px] font-bold">RTC</span>
            </ToolButton>
            <Tools names={widgets2} />
            <Sep />
            <Tools names={["video", "form"]} />
            <Sep />
            <Tools names={["brush", "picker", "highlight"]} />
            <button aria-label="Line color" className="flex w-[11px] justify-center">
              <DropArrow />
            </button>
            <ToolButton icon="bucket" />
            <button aria-label="Fill color" className="flex w-[11px] justify-center">
              <DropArrow />
            </button>
            <Cap />
          </Toolbar>
        </div>

        <div className="flex h-[25px] items-start gap-1">
          <Toolbar>
            <Grip />
            <Tools names={align} />
            <Sep />
            <Tools names={["lock", "unlock", "eyeOff", "eye"]} />
            <Sep />
            <Tools names={["sameW", "sameH", "sameSize"]} />
            <Sep />
            <ToolButton icon="front" active />
            <Cap />
          </Toolbar>
          <Toolbar>
            <Grip />
            <label htmlFor="content" className="w-[97px] pr-[3px] text-right whitespace-nowrap">Label Content</label>
            <Combo id="content" value="" width="w-[53px]" />
            <label htmlFor="state" className="w-[34px] pl-[3px]">State</label>
            <Combo id="state" value="0" width="w-[46px]" />
            <Cap />
          </Toolbar>
        </div>
      </div>

      <main className="flex flex-1 bg-[#dde7fb]">
        <div className="flex min-w-0 flex-1 flex-col">
          <div className="flex flex-1 gap-1">
            <ProjectPanel />
            <Editor />
          </div>
          <section className="mt-1 flex h-[185px] flex-col">
            <PanelHeader title="Output" />
            <div className="flex-1 border border-[#24348f] bg-white" />
          </section>
          <div className="mb-1 h-[6px] bg-[#f0f0f0]" />
          <CommandPanel />
          <div className="flex h-[23px] items-start border-t border-[#f3be6b] bg-gradient-to-b from-white to-[#cddbf8] pl-[2px]">
            <button className="flex h-5 items-center gap-[3px] rounded-b-sm border border-[#4a66a8] bg-[#b9cbf3] pr-[2px] pl-1">
              {icons.output}
              Find
            </button>
            <button className="flex h-5 items-center gap-[3px] rounded-b-sm border border-t-0 border-[#4a66a8] bg-gradient-to-b from-[#f6c984] to-[#fde7c2] pr-[2px] pl-1">
              {icons.output}
              Command
            </button>
            <div className="h-px flex-1 bg-[#4a66a8]" />
          </div>
        </div>
        <div className="ml-1 flex w-[473px] shrink-0 flex-col">
          <PropertyPanel />
          <LayerPanel />
        </div>
      </main>

      <footer className="flex h-5 shrink-0 items-center text-[11px]">
        <span className="flex-1 pl-[2px]">Run Simulator</span>
        <span className="w-[208px] border-l border-[#d5d5d5] pl-[2px]">PROG</span>
        <span className="w-[101px] border-l border-[#d5d5d5] pl-[2px] whitespace-nowrap">Invalidate; Hard-Ve</span>
      </footer>
    </div>
  );
}
